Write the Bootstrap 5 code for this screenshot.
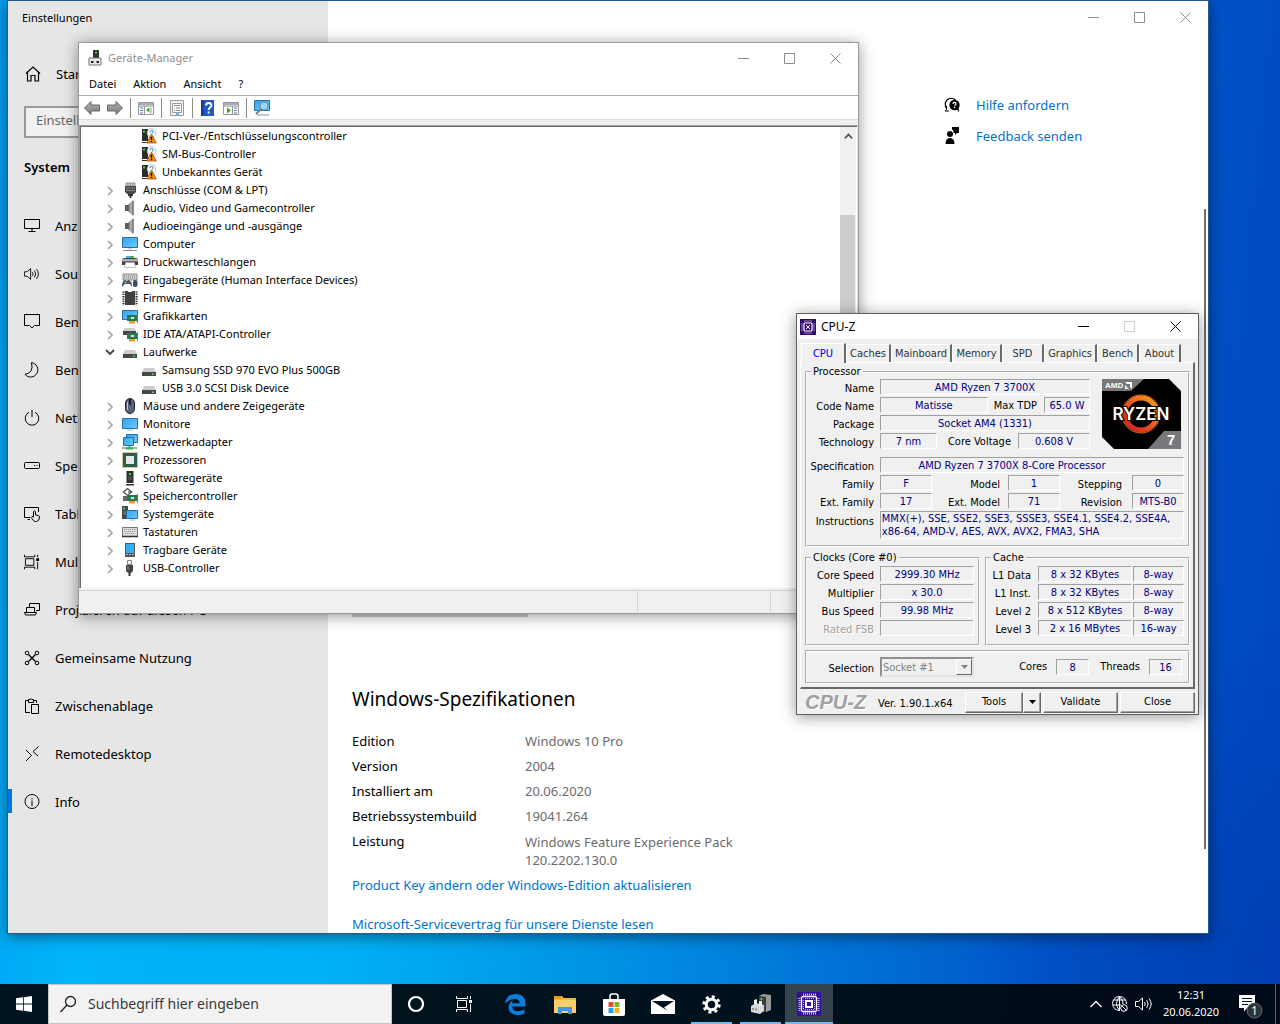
<!DOCTYPE html>
<html lang="de">
<head>
<meta charset="utf-8">
<meta name="viewport" content="width=device-width, initial-scale=1">
<title>Desktop</title>
<link href="https://cdn.jsdelivr.net/npm/bootstrap@5.3.0/dist/css/bootstrap.min.css" rel="stylesheet">
<style>
:root{--ui:"Noto Sans","Open Sans",sans-serif;--tahoma:"DejaVu Sans Condensed","DejaVu Sans",sans-serif;--accent:#0078d7}
body{font-family:var(--ui);font-size:13px;line-height:18px;color:#000;overflow:hidden}
svg{flex:none;display:block;overflow:visible}
.desk{background:radial-gradient(circle at 1290px 960px,rgba(0,60,175,.75),rgba(0,60,175,0) 330px),linear-gradient(96deg,#009bee 0,#00b4fb 12%,#00b0f5 32%,#0098e8 48%,#0072d6 68%,#0055c8 84%,#0046bf 100%)}
.win{position:absolute;background:#fff;box-shadow:0 2px 14px rgba(0,0,0,.42)}
.win-settings{left:8px;top:1px;width:1200px;height:932px;box-shadow:0 0 0 1px #245a92,0 3px 14px rgba(0,0,0,.5)}
.win-devices{left:78px;top:42px;width:781px;height:572px;border:1px solid #9a9a9a}
.win-cpuz{left:796px;top:313px;width:403px;height:402px;border:1px solid #5f5f5f;background:#f0f0f0}
.ctls{display:flex;align-self:stretch}
.ctl{width:46px;border:0;padding:0;background:none;display:flex;align-items:center;justify-content:center;color:#8c8c8c}
.ctl svg{width:11px;height:11px}
.ctl:disabled{color:#ccc}

/* settings */
.side{width:320px;background:#e6e6e6}
.side-title{height:33px;line-height:33px;padding-left:14px;font-size:11px}
.side-link{height:48px;padding-left:16px;gap:15px;color:#000;text-decoration:none;white-space:nowrap;position:relative}
.side-link svg,.side-home svg{width:16px;height:16px}
.side-home{height:40px;margin-top:20px;padding-left:17px;gap:15px;color:#000;text-decoration:none}
.side-search{margin:12px 16px 0;height:32px;width:288px;border:2px solid #999;border-radius:0;background:#f1f1f1;padding:0 10px 4px;font-size:13px;color:#666}
.side-search::placeholder{color:#666}
.side-head{font-size:13px;font-weight:600;line-height:18px;margin:20px 0 26px 16px}
.side-link.active::before{content:"";position:absolute;left:0;top:11px;width:4px;height:24px;background:var(--accent)}
.set-bar{height:32px}
.info{padding:552px 0 0 24px}
.rename-btn{width:176px;height:32px;border:0;background:#ccc;font-size:13px}
.info h2{font-size:19px;font-weight:400;line-height:28px;margin:68px 0 16px}
.spec{display:grid;grid-template-columns:173px 1fr;margin:0;line-height:25px}
.spec dt{font-weight:400}
.spec dd{margin:0;color:#6b6b6b}
.spec .two-line{line-height:18px;padding-top:4px;max-width:240px}
.info a,.aid a{color:#0073cf;text-decoration:none}
.info-link{display:block;line-height:18px;margin-top:7px}
.info-link + .info-link{margin-top:21px}
.aid{width:260px;padding-top:56px}
.aid a{height:31px;gap:15px}
.page-bar{width:2px;height:640px;background:#6f6f6f;margin:176px 2px 0 0}

/* device manager */
.dm{font-size:11px;line-height:18px}
.dm-title{height:30px;padding-left:8px;gap:5px;color:#8f8f8f}
.dm-menu{height:22px;padding-left:2px;gap:1px;border-bottom:1px solid #adadad;box-sizing:content-box}
.dm-menu button{border:0;background:none;padding:0 8px;color:#000}
.dm-tools{height:24px;padding-left:5px;gap:7px;border-bottom:1px solid #dadada}
.dm-tools button{border:0;background:none;padding:0;width:16px;height:16px}
.dm-sep{width:1px;height:20px;background:#8b8b8b}
.dm-body{height:470px;padding-top:5px;background:#f0f0f0}
.dm-view{border:1px solid #a0a0a0;border-bottom:0;border-right-color:#e3e3e3;height:463px;box-shadow:inset 1px 1px 0 #696969;padding:1px 1px 0 1px;background:#fff}
.tree{list-style:none;margin:0;padding:0;color:#000}
.tree li{height:18px;display:flex;align-items:center;padding-left:24px;white-space:nowrap}
.tree li svg{width:16px;height:16px}
.tree li svg.tw{width:10px;height:10px;margin:2px 7px 0 0}
.tree li.sub{padding-left:60px}
.tree li svg:not(.tw){margin-right:5px}
.bar{width:16px;background:#f0f0f0}
.bar-up{height:18px}
.bar-thumb{margin-top:70px;height:340px;background:#cdcdcd;width:15px}
.dm-status{height:23px;background:#f0f0f0;border-top:1px solid #d4d4d4}
.dm-status span{border-right:1px solid #d4d4d4;width:133px}
.dm-status span:first-child{width:559px}

/* cpu-z */
.cz{font-family:var(--tahoma);font-size:11px;line-height:14px;color:#000}
.cz-title{height:25px;background:#fff;padding-left:3px;gap:5px;font-family:var(--ui);font-size:12px}
.cz-title .ctl:enabled{color:#000}
.cz-tabs{display:grid;grid-template-columns:45px 45px 61px 50px 42px 53px 42px 42px;align-items:end;height:23px;padding-left:4px}
.cz-tabs button{height:18px;padding:0;border:1px solid #fff;border-right:2px solid #696969;border-bottom:0;background:#f0f0f0;color:#333;line-height:18px;white-space:nowrap}
.cz-tabs button.active{height:20px;color:#0000e6;margin-bottom:-1px;line-height:18px;position:relative}
.cz-page{margin:0 3px;border:solid;border-width:1px 2px 2px 1px;border-color:#fff #696969 #696969 #fff;padding:3px 3px 3px 4px}
.cz fieldset{border:2px groove #fff;padding:0 4px 6px 0;margin:0;min-width:0}
.cz legend{float:none;width:auto;font-size:11px;line-height:12px;margin:0 0 0 4px;padding:0 2px}
.cz-top{margin-top:1px}
.rowz{display:flex;align-items:center;height:16px;margin-bottom:2px}
.cz-top + .rowz{margin-top:6px}
.lab{width:67px;margin-right:6px;text-align:right;white-space:nowrap;line-height:16px;padding-top:3px}
.val{display:block;height:16px;line-height:16px;border:1px solid;border-color:#a0a0a0 #fff #fff #a0a0a0;color:#000080;text-align:center;white-space:nowrap}
.cz-spec{padding-right:40px}
.w-s{width:52px}.w-m{width:72px}.w-57{width:57px}.w-tdp{width:46px}
.lab-tdp{margin:2px 7px 0 6px}
.lab-volt{margin:2px 7px 0 auto}
.lab-model{width:68px;margin-right:8px;flex:none}
.lab-step{width:62px;margin-right:10px}
.lab-c{width:44px;margin-right:7px}
.cz-logo{margin:0 3px 0 12px}
.cz-instr{height:28px;text-align:left;line-height:13px;width:305px;padding-left:1px}
.cz-gap{margin-top:5px}
.cz-clocks{width:175px}
.cz-cache{width:205px}
.cz-clocks .rowz:first-of-type,.cz-cache .rowz:first-of-type{margin-top:2px}
.cz-off{color:#a0a0a0;text-shadow:1px 1px 0 #fff}
.w-way{width:51px;margin-left:1px}
.w-n{width:33px;margin:0 2px 0 9px}
.lab-thr{margin-left:9px}
.cz fieldset.cz-sel{height:34px;margin-top:4px;padding-bottom:0}
.cz-pick{position:relative;display:block}
.cz-select{display:block;appearance:none;width:94px;height:20px;font-size:11px;border:2px inset #e3e3e3;border-radius:0;background:#f0f0f0;color:#838383;padding:1px 1px 0;line-height:14px;opacity:1;font-family:inherit}
.cz-pick span{position:absolute;right:2px;top:2px;width:16px;height:16px;border:1px solid;border-color:#fff #696969 #696969 #fff;background:#f0f0f0;display:flex;align-items:center;justify-content:center;pointer-events:none}
.cz-foot{height:25px;padding:1px 3px 0 8px}
.cz-brand{font:italic bold 20px/22px "Liberation Sans",sans-serif;color:#a0a0a0;text-shadow:1px 1px 0 #fff;margin-right:12px}
.cz-btns{gap:2px}
.cz-foot button{height:21px;border:1px solid;border-color:#fff #696969 #696969 #fff;box-shadow:inset -1px -1px 0 #a0a0a0;background:#f0f0f0;padding:0;width:75px;line-height:18px;color:#000}
.cz-foot .cz-tool{width:58px}
.cz-foot .cz-drop{width:18px}

/* taskbar */
.task{height:40px;background:linear-gradient(90deg,#00151f,#00121d 60%,#000a18 85%,#000a18)}
.task button{border:0;padding:0;background:none;height:40px;width:49px;display:flex;align-items:center;justify-content:center}
.task button.narrow{width:48px}
.task button.run{box-shadow:inset 0 -2px 0 #76b9ed;width:41px;margin:0 4px}
.task button.on{background:#34434f;box-shadow:inset 0 -2px 0 #76b9ed;width:48px}
.task-pins{margin-left:3px}
.task-find{width:344px;background:#f2f2f2;border:1px solid #c4c4c4;padding-left:10px;gap:11px}
.task-find input{border:0;background:none;padding:0;width:280px;font-size:14px;outline:0}
.task-find input::placeholder{color:#3a3a3a;opacity:1}
.tray-vol{margin:0 4px 0 6px}
.clock{color:#fff;font-size:11px;line-height:17px;text-align:center;width:60px;padding-bottom:2px}
.notes{margin:0 11px 0 11px}
.peek{width:5px;height:40px;border-left:1px solid #59636b}
</style>
</head>
<body>
<svg width="0" height="0" class="position-absolute" aria-hidden="true">
<defs>
<linearGradient id="scr" x1="0" y1="0" x2="1" y2="1"><stop offset="0" stop-color="#2fa4f0"/><stop offset="1" stop-color="#6cc8ff"/></linearGradient>
<linearGradient id="met" x1="0" x2="1"><stop offset="0" stop-color="#5a5a5a"/><stop offset=".6" stop-color="#b9b9b9"/><stop offset="1" stop-color="#777"/></linearGradient>
<linearGradient id="arr" x1="0" y1="0" x2="0" y2="1"><stop offset="0" stop-color="#b5b5b5"/><stop offset="1" stop-color="#777"/></linearGradient>
<linearGradient id="ring" x1="0" y1="1" x2="1" y2="0"><stop offset="0" stop-color="#c81e1e"/><stop offset=".45" stop-color="#e8501e"/><stop offset="1" stop-color="#f7a11c"/></linearGradient>
<symbol id="min" viewBox="0 0 11 11"><path d="M0 5.5h11" stroke="currentColor"/></symbol>
<symbol id="max" viewBox="0 0 11 11"><path d="M.5.5h10v10H.5z" fill="none" stroke="currentColor"/></symbol>
<symbol id="cls" viewBox="0 0 11 11"><path d="M.5.5l10 10M10.5.5l-10 10" stroke="currentColor"/></symbol>
<symbol id="closed" viewBox="0 0 10 10"><path d="M3 1l4 4-4 4" fill="none" stroke="#a6a6a6" stroke-width="1.700"/></symbol>
<symbol id="open" viewBox="0 0 10 10"><path d="M1 2l4 4 4-4" fill="none" stroke="#404040" stroke-width="1.800"/></symbol>
<symbol id="unk" viewBox="0 0 16 16"><path d="M1 1h6v12H1zM1 14h5v1H1z" fill="#2c2c2c"/><path d="M2 2.500h2v2H2z" fill="#3be03b"/><circle cx="10.500" cy="5" r="4.300" fill="#fff" stroke="#b4bec6"/><path d="M9 4q0-1.500 1.600-1.500T12.200 4q0 1-1.500 1.800" fill="none" stroke="#2a86c8"/><path d="M10.500 6l4.800 9h-9.600z" fill="#f28c1c" stroke="#a85400" stroke-width=".8"/><path d="M10.500 8.800v3M10.500 12.800v1.300" stroke="#000" stroke-width="1.400"/></symbol>
<symbol id="port" viewBox="0 0 16 16"><path d="M4 1h9v3H4z" fill="#ddd" stroke="#888" stroke-width=".8"/><path d="M6 1v3M8.500 1v3M11 1v3" stroke="#888"/><path d="M3 4h11v6l-2 2H5l-2-2z" fill="#4a4a4a"/><path d="M4 6h9M4 8.500h9" stroke="#888"/><path d="M6 12h5v2H6zM7.500 14h2v2h-2z" fill="#333"/></symbol>
<symbol id="spk" viewBox="0 0 16 16"><path d="M3 5h3v6H3z" fill="#5c5c5c"/><path d="M6 5l5-5v16l-5-5z" fill="url(#met)"/><path d="M11.500 1v14" stroke="#8a8a8a"/></symbol>
<symbol id="pc" viewBox="0 0 16 16"><path d="M.5 1.500h15v10H.5z" fill="url(#scr)" stroke="#2a6fa3"/><path d="M6 12h4v1.500H6z" fill="#c6d3de"/><path d="M1 14.500h14" stroke="#8295a5"/></symbol>
<symbol id="prn" viewBox="0 0 16 16"><path d="M4 2h8v4H4z" fill="#3cb1ef"/><path d="M8 2h3v3H8z" fill="#46b549"/><path d="M0 5l2-1h12l2 1v6H0z" fill="#3f3f3f"/><path d="M0 5h16v2.500H0z" fill="#ababab"/><path d="M3.500 8.500h9l1 5h-11z" fill="#fff" stroke="#999" stroke-width=".6"/></symbol>
<symbol id="hid" viewBox="0 0 16 16"><path d="M1 2h14v6H1z" fill="#d2d2d2" stroke="#777" stroke-width=".8"/><path d="M2 4h12M2 6h12" stroke="#777" stroke-dasharray="1 1"/><path d="M0 15q0-7 3-7l2 1q2-2 3 0 2 0 2 6l-2-3H3z" fill="#4d565f"/><circle cx="3.500" cy="10.500" r="1" fill="#59b8ef"/><rect x="11" y="8" width="4.500" height="7" rx="2" fill="#3d4a63"/></symbol>
<symbol id="fw" viewBox="0 0 16 16"><path d="M3 1h10v14H3z" fill="#404040"/><path d="M1.500 1.500v14M14.500 1.500v14" stroke="#222" stroke-width="2" stroke-dasharray="1.300 1"/><path d="M6 0h4v2H6z" fill="#fff"/></symbol>
<symbol id="card" viewBox="0 0 16 16"><path d="M5 7h11v6H5z" fill="#2d8659"/><path d="M6 8h9v4H6z" fill="none" stroke="#176040" stroke-width=".7"/><path d="M9 9h3v2H9z" fill="#cfe8d8"/><path d="M7 13h6v2.500H7z" fill="#f39a1f"/><path d="M15.500 6v9" stroke="#777"/></symbol>
<symbol id="gpu" viewBox="0 0 16 16"><path d="M.5 2.500h15v9H.5z" fill="url(#scr)" stroke="#2a6fa3"/><use href="#card"/></symbol>
<symbol id="hdd" viewBox="0 0 16 16"><path d="M3 6h10l2 4H1z" fill="#cdcdcd"/><path d="M1 10h14v4H1z" fill="#474747"/><path d="M11 11.500h2v1.500h-2z" fill="#46e04a"/></symbol>
<symbol id="ide" viewBox="0 0 16 16"><path d="M3 2h9l2 3H1z" fill="#cdcdcd"/><path d="M1 5h13v4H1z" fill="#474747"/><use href="#card"/></symbol>
<symbol id="mouse" viewBox="0 0 16 16"><rect x="3.500" y=".5" width="9" height="15" rx="4.500" fill="#59637a" stroke="#1f2430"/><path d="M8 1v6" stroke="#1a1f2b" stroke-width="2"/><path d="M5.500 4v8" stroke="#b7c0d2"/></symbol>
<symbol id="mon" viewBox="0 0 16 16"><path d="M.5 2.500h15v10H.5z" fill="url(#scr)" stroke="#2a6fa3"/><path d="M5 14h6" stroke="#9db2c2"/></symbol>
<symbol id="net" viewBox="0 0 16 16"><path d="M4.500.5h11v8h-11z" fill="url(#scr)" stroke="#2a6fa3"/><path d="M1.500 3.500h10v8h-10z" fill="url(#scr)" stroke="#2a6fa3"/><path d="M0 14h15" stroke="#aaa" stroke-width="2"/><path d="M4 14.500h7M7.500 12v3" stroke="#38b449" stroke-width="2"/></symbol>
<symbol id="cpu" viewBox="0 0 16 16"><path d="M.5.5h15v15H.5z" fill="none" stroke="#b08a3a" stroke-dasharray="1 1"/><path d="M1 1h14v14H1z" fill="#2b5f48"/><path d="M4 4h8v8H4z" fill="#e6e6e6"/></symbol>
<symbol id="sw" viewBox="0 0 16 16"><path d="M4.500 1h7v12h-7zM4 14h8v1.500H4z" fill="#2f2f2f"/><path d="M7 3h2v2H7z" fill="#3be03b"/><path d="M6 7h4M6 9h4" stroke="#666"/></symbol>
<symbol id="sto" viewBox="0 0 16 16"><path d="M1.500 4l4-3.500 4 3.500-4 3.500z" fill="none" stroke="#555" stroke-width="1.300"/><path d="M1 8h6v5H1z" fill="#666"/><path d="M6 4h4" stroke="#333"/><use href="#card"/></symbol>
<symbol id="sys" viewBox="0 0 16 16"><path d="M0 0h6v13H0z" fill="#454545"/><path d="M1 1.500h2v2H1z" fill="#3be03b"/><path d="M1 6h4M1 8h4" stroke="#888"/><path d="M4.500 4.500h11v8h-11z" fill="url(#scr)" stroke="#2a6fa3"/><path d="M8 14h5" stroke="#9db2c2"/></symbol>
<symbol id="kbd" viewBox="0 0 16 16"><path d="M.5 3.500h15v9H.5z" fill="#dcdcdc" stroke="#777"/><path d="M2 5.500h12M2 7.500h12M3 9.500h10" stroke="#999" stroke-dasharray="1 1"/><path d="M0 12.500h16" stroke="#333" stroke-width="1.500"/></symbol>
<symbol id="tab" viewBox="0 0 16 16"><path d="M3 1h10v14H3z" fill="#555"/><path d="M4 2h8v9H4z" fill="#36abf5"/><path d="M4 12.500h8" stroke="#bbb" stroke-dasharray="2 1"/></symbol>
<symbol id="usb" viewBox="0 0 16 16"><path d="M5.500.5h4v4h-4z" fill="#eee" stroke="#888"/><path d="M4 5h7v6l-2 2H6l-2-2z" fill="#444"/><path d="M6 6v4" stroke="#999"/><path d="M7.500 13v3" stroke="#333" stroke-width="2"/></symbol>
<symbol id="dm" viewBox="0 0 16 16"><path d="M6 0h6v9H6z" fill="#333"/><path d="M8 1.500h2v2H8z" fill="#35c53a"/><path d="M2 8h12v7H2z" fill="#e8e8e8" stroke="#777"/><path d="M4 11h2.500v2H4zM9.500 11H12v2H9.500z" fill="#222"/></symbol>
<symbol id="list" viewBox="0 0 16 16"><path d="M.5 2.500h15v12H.5z" fill="#fff" stroke="#999"/><path d="M1 4h14" stroke="#a5b0bf" stroke-width="2"/><path d="M1 6h14" stroke="#888"/></symbol>
<symbol id="z" viewBox="0 0 16 16"><path d="M0 0h16v16H0z" fill="#35086f"/><rect x="4" y="4" width="8" height="8" rx="1" fill="none" stroke="#fff" stroke-width="1.200"/><path d="M6 6l4 4M10 6l-4 4" stroke="#fff"/><path d="M4.500 2h7M4.500 14h7M2 4.500v7M14 4.500v7" stroke="#fff" stroke-dasharray="1 1"/></symbol>
<symbol id="vol" viewBox="0 0 18 16"><path d="M.5 5.500h3l4-3.500v12l-4-3.500h-3z" fill="none" stroke="currentColor"/><path d="M9.500 6q1.600 2 0 4M11.700 4.200q3 3.800 0 7.600M14 2.500q4.400 5.500 0 11" fill="none" stroke="currentColor"/></symbol>
<symbol id="film" viewBox="0 0 17 16"><path d="M1.500 4.500h9v7h-9zM.5 0v2.500h11V0M.5 16v-2.500h11V16M14.500 0v3M14.500 8v8" fill="none" stroke="currentColor"/><path d="M13 4h3v3h-3z" fill="currentColor"/></symbol>
</defs>
</svg>

<div class="vh-100 d-flex flex-column">
<main class="desk flex-grow-1 position-relative overflow-hidden">

<!-- Einstellungen -->
<section class="win win-settings d-flex">
  <nav class="side d-flex flex-column overflow-hidden">
    <div class="side-title">Einstellungen</div>
    <a class="side-home d-flex align-items-center" href="#"><svg viewBox="0 0 16 16" fill="none" stroke="#000" stroke-width="1.200"><path d="M1 7.500L8 1l7 6.500M2.500 6.500V15H6V9.500h4V15h3.500V6.500"/></svg>Startseite</a>
    <input class="side-search" type="search" placeholder="Einstellung suchen" aria-label="Einstellung suchen">
    <h1 class="side-head">System</h1>
    <a class="side-link d-flex align-items-center" href="#"><svg viewBox="0 0 16 16" fill="none" stroke="#000"><path d="M.5 1.500h15v9H.5zM8 11v2.500M4.500 13.500h7"/></svg>Anzeige</a>
    <a class="side-link d-flex align-items-center" href="#"><svg viewBox="0 0 18 16"><use href="#vol"/></svg>Sound</a>
    <a class="side-link d-flex align-items-center" href="#"><svg viewBox="0 0 16 16" fill="none" stroke="#000"><path d="M.5.5h15v11h-5L8 14l-2.500-2.500h-5z"/></svg>Benachrichtigungen</a>
    <a class="side-link d-flex align-items-center" href="#"><svg viewBox="0 0 16 16" fill="none" stroke="#000"><path d="M7.500.7A7.200 7.200 0 1 1 1 12.300Q10 11 7.500.7z"/></svg>Benachrichtigungsassistent</a>
    <a class="side-link d-flex align-items-center" href="#"><svg viewBox="0 0 16 16" fill="none" stroke="#000"><path d="M5 2.300a6.800 6.800 0 1 0 6 0M8 0v7"/></svg>Netzbetrieb und Energiesparen</a>
    <a class="side-link d-flex align-items-center" href="#"><svg viewBox="0 0 16 16" fill="none" stroke="#000"><rect x=".5" y="4.500" width="15" height="6" rx="1"/><path d="M10 7.500h1M12.500 7.500h1"/></svg>Speicher</a>
    <a class="side-link d-flex align-items-center" href="#"><svg viewBox="0 0 16 16" fill="none" stroke="#000"><path d="M6 11.500H.5v-10h14V6M3.500 13.500H6"/><path d="M9.500 11V5.500q1-1.500 2 0V9l3 .5q1 .5 1 1.500 0 4-3 4.500h-2L7 11.500q.5-1.500 2.500-.5z" fill="#e6e6e6"/></svg>Tablet</a>
    <a class="side-link d-flex align-items-center" href="#"><svg viewBox="0 0 17 16"><use href="#film"/></svg>Multitasking</a>
    <a class="side-link d-flex align-items-center" href="#"><svg viewBox="0 0 16 16" fill="none" stroke="#000"><path d="M5.500 6V1.500h10v7H12M2.500 5.500h8v5h-8zM.5 10.500h12l-1 2.500H1.500z"/></svg>Projizieren auf diesen PC</a>
    <a class="side-link d-flex align-items-center" href="#"><svg viewBox="0 0 16 16" fill="none" stroke="#000"><circle cx="3" cy="3" r="1.800"/><circle cx="13" cy="3" r="1.800"/><circle cx="3" cy="13" r="1.800"/><circle cx="13" cy="13" r="1.800"/><path d="M4.500 4.500l7 7M11.500 4.500l-7 7" stroke-width="1.400"/></svg>Gemeinsame Nutzung</a>
    <a class="side-link d-flex align-items-center" href="#"><svg viewBox="0 0 16 16" fill="none" stroke="#000"><path d="M6 14.500H1.500v-12H5M9 2.500h3.500V5M4.500 4.500v-3H6Q7-.3 8 1.500h1.500v3zM7.500 6.500h7v9h-7z"/></svg>Zwischenablage</a>
    <a class="side-link d-flex align-items-center" href="#"><svg viewBox="0 0 16 16" fill="none" stroke="#000"><path d="M2 4l5.500 5.500L2 15M14.500.5L9 5.500l5 4.500"/></svg>Remotedesktop</a>
    <a class="side-link active d-flex align-items-center" href="#"><svg viewBox="0 0 16 16" fill="none" stroke="#000"><circle cx="8" cy="7.500" r="7"/><path d="M8 6.500V12M8 4v1.300"/></svg>Info</a>
  </nav>
  <div class="flex-grow-1 d-flex flex-column overflow-hidden">
    <header class="set-bar d-flex justify-content-end flex-shrink-0">
      <div class="ctls"><button class="ctl" aria-label="Minimieren"><svg><use href="#min"/></svg></button><button class="ctl" aria-label="Maximieren"><svg><use href="#max"/></svg></button><button class="ctl" aria-label="Schließen"><svg><use href="#cls"/></svg></button></div>
    </header>
    <div class="d-flex flex-grow-1">
      <div class="info flex-grow-1">
        <button class="rename-btn">Diesen PC umbenennen</button>
        <h2>Windows-Spezifikationen</h2>
        <dl class="spec">
          <dt>Edition</dt><dd>Windows 10 Pro</dd>
          <dt>Version</dt><dd>2004</dd>
          <dt>Installiert am</dt><dd>20.06.2020</dd>
          <dt>Betriebssystembuild</dt><dd>19041.264</dd>
          <dt>Leistung</dt><dd class="two-line">Windows Feature Experience Pack 120.2202.130.0</dd>
        </dl>
        <a class="info-link" href="#">Product Key ändern oder Windows-Edition aktualisieren</a>
        <a class="info-link" href="#">Microsoft-Servicevertrag für unsere Dienste lesen</a>
      </div>
      <div class="aid">
        <a class="d-flex align-items-center" href="#"><svg width="17" height="17" viewBox="0 0 17 17"><path d="M3 12.500A6 6 0 1 1 11.500 4" fill="none" stroke="#000" stroke-width="1.200"/><path d="M2.500 10v3.500L1 15h4" fill="none" stroke="#000"/><circle cx="10.500" cy="9" r="5.200"/><path d="M12 12l3 4.500-.5-5z"/><path d="M9 8q0-1.700 1.500-1.700T12 8q0 .8-1.500 1.600M10.500 10.800v1.200" fill="none" stroke="#fff" stroke-width="1.200"/></svg>Hilfe anfordern</a>
        <a class="d-flex align-items-center" href="#"><svg width="17" height="17" viewBox="0 0 17 17"><circle cx="6" cy="7" r="3"/><path d="M1.500 17q0-6 4.500-6t4.500 6zM8 0h7v6h-2l-2 2V6H9.500Q10 3 8 2.500z"/></svg>Feedback senden</a>
      </div>
      <div class="page-bar"></div>
    </div>
  </div>
</section>

<!-- Geräte-Manager -->
<section class="win win-devices dm">
  <header class="dm-title d-flex align-items-center">
    <svg width="16" height="16"><use href="#dm"/></svg><span class="me-auto">Geräte-Manager</span>
    <div class="ctls"><button class="ctl" aria-label="Minimieren"><svg><use href="#min"/></svg></button><button class="ctl" aria-label="Maximieren"><svg><use href="#max"/></svg></button><button class="ctl" aria-label="Schließen"><svg><use href="#cls"/></svg></button></div>
  </header>
  <div class="dm-menu d-flex align-items-center"><button>Datei</button><button>Aktion</button><button>Ansicht</button><button>?</button></div>
  <div class="dm-tools d-flex align-items-center">
    <button aria-label="Zurück"><svg width="16" height="16" viewBox="0 0 16 16"><path d="M.5 8L7 1.500V5h8.500v6H7v3.500z" fill="url(#arr)" stroke="#666"/></svg></button>
    <button aria-label="Vorwärts"><svg width="16" height="16" viewBox="0 0 16 16"><path d="M15.500 8L9 1.500V5H.5v6H9v3.500z" fill="url(#arr)" stroke="#666"/></svg></button>
    <span class="dm-sep"></span>
    <button aria-label="Konsolenstruktur"><svg width="16" height="16" viewBox="0 0 16 16"><use href="#list"/><path d="M2 8h3M2 10.500h3M2 13h3" stroke="#5577aa"/><path d="M6.500 6v9M13 7.500v6" stroke="#999"/><path d="M11.500 7.500v5L8 10z" fill="#37a52c"/></svg></button>
    <span class="dm-sep"></span>
    <button aria-label="Eigenschaften"><svg width="16" height="16" viewBox="0 0 16 16"><path d="M1.500.5h13v15h-13z" fill="#f4f4f4" stroke="#999"/><path d="M3.500 3.500h9v9h-9z" fill="#fff" stroke="#999"/><path d="M5 5.500h6M5 8h1M7 8h4M5 10.500h1M7 10.500h4" stroke="#888"/><path d="M7 14h3" stroke="#2fa4f0" stroke-width="1.500"/></svg></button>
    <span class="dm-sep"></span>
    <button aria-label="Hilfe"><svg width="16" height="16" viewBox="0 0 16 16"><path d="M1 0h13v16H1z" fill="#2459c4"/><path d="M1 0h2.500v16H1z" fill="#173d91"/><path d="M6 5.500Q6 3 8.700 3t2.700 2.500q0 1.500-1.700 2.300-1 .6-1 2.200M8.700 11.500v2" fill="none" stroke="#fff" stroke-width="1.800"/></svg></button>
    <button aria-label="Aktionsbereich"><svg width="16" height="16" viewBox="0 0 16 16"><use href="#list"/><path d="M11 8h3M11 10.500h3M11 13h3" stroke="#5577aa"/><path d="M9.500 6v9" stroke="#999"/><path d="M4 7.500v6L8 10.500z" fill="#37a52c"/></svg></button>
    <span class="dm-sep"></span>
    <button aria-label="Nach geänderter Hardware suchen"><svg width="16" height="16" viewBox="0 0 16 16"><path d="M.5.500h15v10H.5z" fill="url(#scr)" stroke="#2a6fa3"/><path d="M3 15h12" stroke="#8295a5"/><circle cx="10" cy="6" r="4" fill="#bfe4fb" fill-opacity=".7" stroke="#6c8aa0"/><path d="M7 9l-5 5" stroke="#6d7f8d" stroke-width="2"/></svg></button>
  </div>
  <div class="dm-body">
    <div class="dm-view d-flex">
      <ul class="tree flex-grow-1 overflow-hidden">
        <li class="sub"><svg><use href="#unk"/></svg>PCI-Ver-/Entschlüsselungscontroller</li>
        <li class="sub"><svg><use href="#unk"/></svg>SM-Bus-Controller</li>
        <li class="sub"><svg><use href="#unk"/></svg>Unbekanntes Gerät</li>
        <li><svg class="tw"><use href="#closed"/></svg><svg><use href="#port"/></svg>Anschlüsse (COM &amp; LPT)</li>
        <li><svg class="tw"><use href="#closed"/></svg><svg><use href="#spk"/></svg>Audio, Video und Gamecontroller</li>
        <li><svg class="tw"><use href="#closed"/></svg><svg><use href="#spk"/></svg>Audioeingänge und -ausgänge</li>
        <li><svg class="tw"><use href="#closed"/></svg><svg><use href="#pc"/></svg>Computer</li>
        <li><svg class="tw"><use href="#closed"/></svg><svg><use href="#prn"/></svg>Druckwarteschlangen</li>
        <li><svg class="tw"><use href="#closed"/></svg><svg><use href="#hid"/></svg>Eingabegeräte (Human Interface Devices)</li>
        <li><svg class="tw"><use href="#closed"/></svg><svg><use href="#fw"/></svg>Firmware</li>
        <li><svg class="tw"><use href="#closed"/></svg><svg><use href="#gpu"/></svg>Grafikkarten</li>
        <li><svg class="tw"><use href="#closed"/></svg><svg><use href="#ide"/></svg>IDE ATA/ATAPI-Controller</li>
        <li><svg class="tw"><use href="#open"/></svg><svg><use href="#hdd"/></svg>Laufwerke</li>
        <li class="sub"><svg><use href="#hdd"/></svg>Samsung SSD 970 EVO Plus 500GB</li>
        <li class="sub"><svg><use href="#hdd"/></svg>USB 3.0 SCSI Disk Device</li>
        <li><svg class="tw"><use href="#closed"/></svg><svg><use href="#mouse"/></svg>Mäuse und andere Zeigegeräte</li>
        <li><svg class="tw"><use href="#closed"/></svg><svg><use href="#mon"/></svg>Monitore</li>
        <li><svg class="tw"><use href="#closed"/></svg><svg><use href="#net"/></svg>Netzwerkadapter</li>
        <li><svg class="tw"><use href="#closed"/></svg><svg><use href="#cpu"/></svg>Prozessoren</li>
        <li><svg class="tw"><use href="#closed"/></svg><svg><use href="#sw"/></svg>Softwaregeräte</li>
        <li><svg class="tw"><use href="#closed"/></svg><svg><use href="#sto"/></svg>Speichercontroller</li>
        <li><svg class="tw"><use href="#closed"/></svg><svg><use href="#sys"/></svg>Systemgeräte</li>
        <li><svg class="tw"><use href="#closed"/></svg><svg><use href="#kbd"/></svg>Tastaturen</li>
        <li><svg class="tw"><use href="#closed"/></svg><svg><use href="#tab"/></svg>Tragbare Geräte</li>
        <li><svg class="tw"><use href="#closed"/></svg><svg><use href="#usb"/></svg>USB-Controller</li>
      </ul>
      <div class="bar">
        <div class="bar-up d-flex align-items-center justify-content-center"><svg width="9" height="9" viewBox="0 0 9 9"><path d="M.8 6.500l3.700-4 3.700 4" fill="none" stroke="#505050" stroke-width="1.800"/></svg></div>
        <div class="bar-thumb"></div>
      </div>
    </div>
  </div>
  <div class="dm-status d-flex"><span></span><span></span></div>
</section>

<!-- CPU-Z -->
<section class="win win-cpuz cz">
  <header class="cz-title d-flex align-items-center">
    <svg width="16" height="16"><use href="#z"/></svg><span class="me-auto">CPU-Z</span>
    <div class="ctls"><button class="ctl" aria-label="Minimieren"><svg><use href="#min"/></svg></button><button class="ctl" aria-label="Maximieren" disabled><svg><use href="#max"/></svg></button><button class="ctl" aria-label="Schließen"><svg><use href="#cls"/></svg></button></div>
  </header>
  <div class="cz-tabs"><button class="active">CPU</button><button>Caches</button><button>Mainboard</button><button>Memory</button><button>SPD</button><button>Graphics</button><button>Bench</button><button>About</button></div>
  <div class="cz-page">
    <fieldset><legend>Processor</legend>
      <div class="cz-top d-flex">
        <div class="flex-grow-1">
          <div class="rowz"><span class="lab">Name</span><output class="val flex-grow-1">AMD Ryzen 7 3700X</output></div>
          <div class="rowz"><span class="lab">Code Name</span><output class="val flex-grow-1">Matisse</output><span class="lab-tdp">Max TDP</span><output class="val w-tdp">65.0 W</output></div>
          <div class="rowz"><span class="lab">Package</span><output class="val flex-grow-1">Socket AM4 (1331)</output></div>
          <div class="rowz"><span class="lab">Technology</span><output class="val w-57">7 nm</output><span class="lab-volt">Core Voltage</span><output class="val w-m">0.608 V</output></div>
        </div>
        <svg class="cz-logo" width="79" height="70" viewBox="0 0 79 70"><path d="M0 0h67l12 12v58H12L0 58z" fill="#000"/><path d="M0 0h42L29 12H0z" fill="#77787b"/><path d="M62 52h17v18H46z" fill="#77787b"/><text x="3" y="9" font-family="Liberation Sans" font-weight="bold" font-size="8" fill="#fff">AMD</text><path d="M23 3h7v7l-2-2V5h-3zM23 6v4h4l-1.500-1.500H24.500V7.500z" fill="#fff"/><circle cx="39" cy="35" r="16" fill="none" stroke="url(#ring)" stroke-width="5"/><circle cx="39" cy="35" r="19" fill="none" stroke="#e8701e" stroke-width="1"/><text x="39" y="41" text-anchor="middle" font-family="Inter, sans-serif" font-weight="600" font-size="17" fill="#fff" stroke="#000" stroke-width="2" paint-order="stroke">RYZEN</text><text x="65" y="66" font-family="Liberation Sans" font-weight="bold" font-size="15" fill="#fff">7</text></svg>
      </div>
      <div class="rowz"><span class="lab">Specification</span><output class="val cz-spec flex-grow-1">AMD Ryzen 7 3700X 8-Core Processor</output></div>
      <div class="rowz"><span class="lab">Family</span><output class="val w-s">F</output><span class="lab lab-model">Model</span><output class="val w-s">1</output><span class="lab lab-step">Stepping</span><output class="val flex-grow-1">0</output></div>
      <div class="rowz"><span class="lab">Ext. Family</span><output class="val w-s">17</output><span class="lab lab-model">Ext. Model</span><output class="val w-s">71</output><span class="lab lab-step">Revision</span><output class="val flex-grow-1">MTS-B0</output></div>
      <div class="d-flex"><span class="lab">Instructions</span><output class="val flex-grow-1 cz-instr">MMX(+), SSE, SSE2, SSE3, SSSE3, SSE4.1, SSE4.2, SSE4A,<br>x86-64, AMD-V, AES, AVX, AVX2, FMA3, SHA</output></div>
    </fieldset>
    <div class="d-flex justify-content-between cz-gap">
      <fieldset class="cz-clocks"><legend>Clocks (Core #0)</legend>
        <div class="rowz"><span class="lab">Core Speed</span><output class="val flex-grow-1">2999.30 MHz</output></div>
        <div class="rowz"><span class="lab">Multiplier</span><output class="val flex-grow-1">x 30.0</output></div>
        <div class="rowz"><span class="lab">Bus Speed</span><output class="val flex-grow-1">99.98 MHz</output></div>
        <div class="rowz"><span class="lab cz-off">Rated FSB</span><output class="val flex-grow-1"></output></div>
      </fieldset>
      <fieldset class="cz-cache"><legend>Cache</legend>
        <div class="rowz"><span class="lab lab-c">L1 Data</span><output class="val flex-grow-1">8 x 32 KBytes</output><output class="val w-way">8-way</output></div>
        <div class="rowz"><span class="lab lab-c">L1 Inst.</span><output class="val flex-grow-1">8 x 32 KBytes</output><output class="val w-way">8-way</output></div>
        <div class="rowz"><span class="lab lab-c">Level 2</span><output class="val flex-grow-1">8 x 512 KBytes</output><output class="val w-way">8-way</output></div>
        <div class="rowz"><span class="lab lab-c">Level 3</span><output class="val flex-grow-1">2 x 16 MBytes</output><output class="val w-way">16-way</output></div>
      </fieldset>
    </div>
    <fieldset class="cz-sel d-flex align-items-center">
      <label class="lab" for="sock">Selection</label>
      <span class="cz-pick"><select id="sock" class="cz-select" disabled><option>Socket #1</option></select><span><svg width="7" height="4" viewBox="0 0 7 4"><path d="M0 0h7L3.500 4z" fill="#838383"/></svg></span></span>
      <span class="ms-auto">Cores</span><output class="val w-n">8</output><span class="lab-thr">Threads</span><output class="val w-n">16</output>
    </fieldset>
  </div>
  <footer class="cz-foot d-flex align-items-center">
    <span class="cz-brand">CPU-Z</span><span class="mt-1">Ver. 1.90.1.x64</span>
    <div class="ms-auto d-flex cz-btns"><div class="d-flex"><button class="cz-tool">Tools</button><button class="cz-drop d-flex align-items-center justify-content-center" aria-label="Mehr Tools"><svg width="7" height="4" viewBox="0 0 7 4"><path d="M0 0h7L3.500 4z"/></svg></button></div><button>Validate</button><button>Close</button></div>
  </footer>
</section>
</main>

<footer class="task d-flex">
  <button class="narrow" aria-label="Start"><svg width="16" height="16" viewBox="0 0 16 16" fill="#fff"><path d="M0 2.300l7-1v6.300H0zM7.800 1.200L16 0v7.600H7.800zM0 8.400h7v6.300l-7-1zM7.800 8.400H16V16l-8.200-1.200z"/></svg></button>
  <label class="task-find d-flex align-items-center"><svg width="18" height="18" viewBox="0 0 18 18" fill="none" stroke="#222" stroke-width="1.300"><circle cx="11.500" cy="6.500" r="5"/><path d="M8 10l-6.500 7"/></svg><input type="text" placeholder="Suchbegriff hier eingeben" aria-label="Suche"></label>
  <button class="narrow" aria-label="Cortana"><svg width="18" height="18" viewBox="0 0 18 18"><circle cx="9" cy="9" r="7" fill="none" stroke="#fff" stroke-width="2.200"/></svg></button>
  <button class="narrow text-white" aria-label="Taskansicht"><svg width="17" height="16"><use href="#film"/></svg></button>
  <div class="task-pins d-flex">
  <button aria-label="Edge"><svg width="21" height="21" viewBox="0 0 21 21"><path d="M0 9.500Q1.500 0 11 0q9.500.5 9.500 9.500v3H7q.5 4.500 6 4.800 3.500 0 6.500-1.800v4Q16 21.200 12 21 4 20.500 3.500 13.500 4 8.500 8 6.500 7 8 7 9.200h7.500Q14.500 5 10 5 4 5 0 9.500z" fill="#0a7fe0"/></svg></button>
  <button aria-label="Explorer"><svg width="22" height="19" viewBox="0 0 22 19"><path d="M0 1h8l1.500 2H22v15H0z" fill="#f5b83d"/><path d="M0 1h7v3H0z" fill="#e79a1a"/><path d="M0 5h22v13H0z" fill="#fccf6b"/><path d="M4 19v-7h14v7h-4v-3H8v3z" fill="#3f97df"/></svg></button>
  <button aria-label="Store"><svg width="24" height="23" viewBox="0 0 24 23"><path d="M8 6V3.500Q8 1 10 1h4q2 0 2 2.500V6" fill="none" stroke="#fff" stroke-width="1.500"/><path d="M1 6h22v15q0 2-2 2H3q-2 0-2-2z" fill="#fff"/><path d="M6.500 9h5v5h-5z" fill="#e8502a"/><path d="M12.500 9h5v5h-5z" fill="#7cba27"/><path d="M6.500 15h5v5h-5z" fill="#1fa4ec"/><path d="M12.500 15h5v5h-5z" fill="#f9b21c"/></svg></button>
  <button aria-label="Mail"><svg width="24" height="20" viewBox="0 0 24 20"><path d="M0 6.500L12 0l12 6.500V20H0z" fill="#fff"/><path d="M1 7h22L13 13.500l4 3.500z" fill="#00121d"/></svg></button>
  <button class="run" aria-label="Einstellungen"><svg width="19" height="19" viewBox="0 0 19 19" fill="none" stroke="#fff"><circle cx="9.500" cy="9.500" r="5.300" stroke-width="3"/><circle cx="9.500" cy="9.500" r="7.700" stroke-width="3" stroke-dasharray="3 3.050"/></svg></button>
  <button class="run" aria-label="Geräte-Manager"><svg width="22" height="22" viewBox="0 0 22 22"><path d="M9 3l4-2 8 1v15l-5 2-7-2z" fill="#9b9b9b"/><path d="M9 3l7 1v15l-7-2z" fill="#3a3a3a"/><path d="M10.500 5h2v2h-2z" fill="#3be03b"/><path d="M1 13l5-3 8 2v6l-4 3-9-2z" fill="#d9d9d9"/><path d="M4 7l3-1v5H4zM9 8h3v5H9z" fill="#efefef"/><path d="M3 15v2M6 15.500v2" stroke="#555"/></svg></button>
  <button class="on" aria-label="CPU-Z"><svg width="24" height="24" viewBox="0 0 24 24"><path d="M0 0h24v24H0z" fill="#35109a"/><rect x="4.500" y="4.500" width="15" height="15" rx="1.500" fill="none" stroke="#fff" stroke-width="1.300"/><path d="M8 8h8v8H8z" fill="#fff"/><path d="M10 10h4v4h-4z" fill="#35109a"/><path d="M6 2.500h13M6 21.500h13M2.500 6v13M21.500 6v13" stroke="#cfc4f0" stroke-width="2" stroke-dasharray="1 1"/><path d="M8 6.500h9M8 17.500h9M6.500 8v9M17.500 8v9" stroke="#cfc4f0" stroke-dasharray="1 1"/></svg></button>
  </div>
  <div class="ms-auto d-flex align-items-center text-white">
    <svg class="me-2" width="14" height="12" viewBox="0 0 14 12" fill="none" stroke="#fff" stroke-width="1.300"><path d="M1.500 9L7 3.500 12.500 9"/></svg>
    <svg width="18" height="18" viewBox="0 0 18 18" fill="none" stroke="#fff"><path d="M9 15.500A7 7 0 1 1 15.500 9"/><path d="M8.500 1.500Q2.500 8.500 8.500 15.500M8.500 1.500q4 4 3.500 7.500M2.500 5h12M2 10h8M8.500 1.500v14"/><circle cx="13" cy="13" r="3.300"/><path d="M11 11l4 4"/></svg>
    <svg class="tray-vol" width="18" height="16"><use href="#vol"/></svg>
    <div class="clock mx-1">12:31<br>20.06.2020</div>
    <svg class="notes" width="28" height="30" viewBox="0 0 28 30"><path d="M3 6h16v13h-8l-3 3.500V19H3z" fill="#fff"/><path d="M6 9.500h10M6 12.500h10M6 15.500h6" stroke="#00101c"/><circle cx="18.500" cy="21.500" r="7.500" fill="#2e3338" stroke="#6b7075"/><text x="18.500" y="26" text-anchor="middle" font-family="Noto Sans" font-size="12" fill="#fff">1</text></svg>
    <span class="peek"></span>
  </div>
</footer>
</div>
<script src="https://cdn.jsdelivr.net/npm/bootstrap@5.3.0/dist/js/bootstrap.bundle.min.js"></script>
</body>
</html>
